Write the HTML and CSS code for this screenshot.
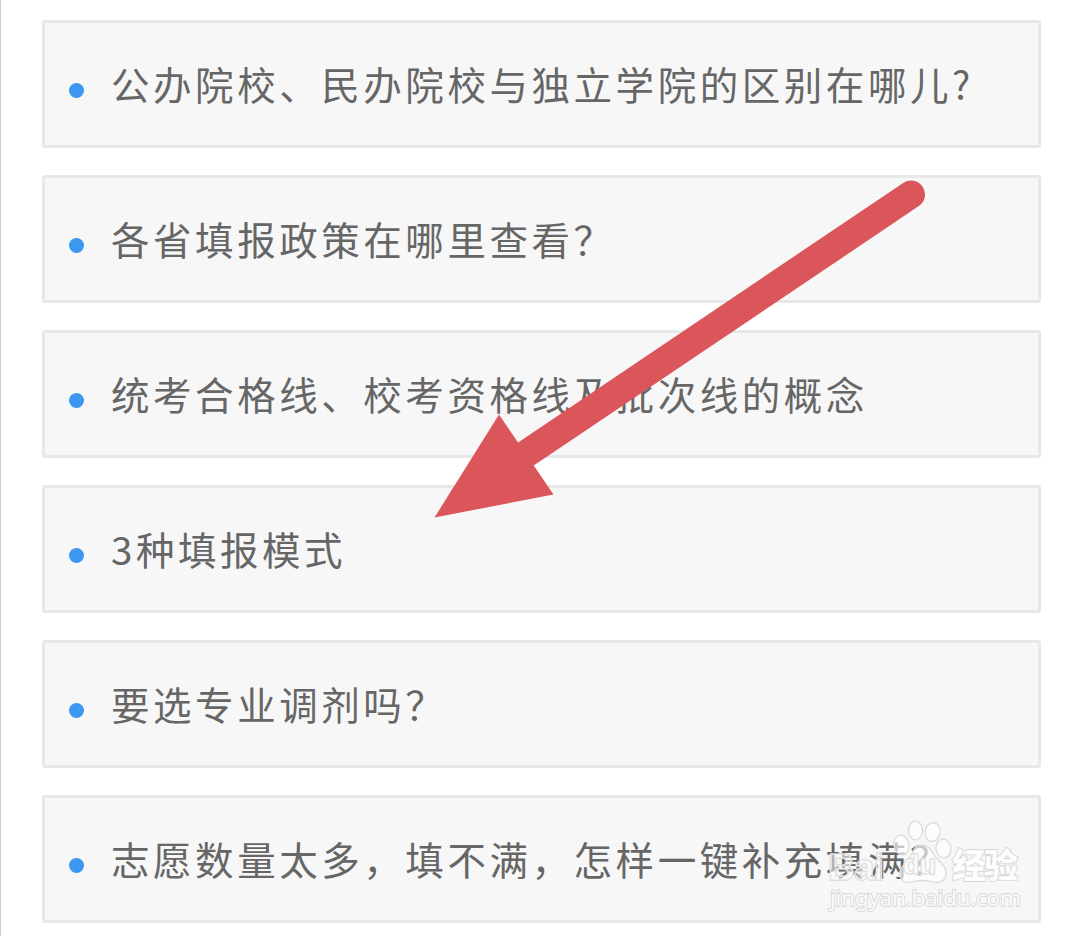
FILE: index.html
```html
<!DOCTYPE html>
<html lang="zh-CN">
  <head>
    <meta charset="UTF-8" />
    <meta name="viewport" content="width=device-width, initial-scale=1.0" />
    <title>志愿填报常见问题</title>
    <link rel="stylesheet" href="styles.css">
  </head>
  <body>
    <main>
      <ul class="questions">
        <li>公办院校、民办院校与独立学院的区别在哪儿?</li>
        <li>各省填报政策在哪里查看？</li>
        <li>统考合格线、校考资格线及批次线的概念</li>
        <li>3种填报模式</li>
        <li>要选专业调剂吗？</li>
        <li>志愿数量太多，填不满，怎样一键补充填满？</li>
      </ul>
    </main>

    <svg class="arrow" width="1080" height="936" viewBox="0 0 1080 936">
      <path d="M911 194.500L520 458" />
      <polygon points="434.500,517.500 499,414.500 553.500,494.500" />
    </svg>

    <svg class="watermark" width="210" height="100" viewBox="820 815 210 100">
      <g class="paw">
        <ellipse cx="901.500" cy="845" rx="7.500" ry="10" transform="rotate(-12 901.500 845)" />
        <ellipse cx="915.500" cy="830.500" rx="7" ry="9.500" />
        <ellipse cx="932.500" cy="832" rx="7.500" ry="9.500" transform="rotate(10 932.500 832)" />
        <ellipse cx="943.500" cy="848.500" rx="7.500" ry="9.500" transform="rotate(-8 943.500 848.500)" />
        <path d="M921 845c8 0 11 6 14 11c5 7 12 11 11 18c-1 8-7 9-13 8c-7-2-15-2-21 0c-8 2-13-3-12-10c1-7 7-10 11-16c3-6 4-11 10-11z" />
      </g>
      <text class="brand" x="828" y="880" textLength="56">Bai</text>
      <text class="brand brand-du" x="903" y="874" textLength="33">du</text>
      <text class="brand-cn" x="952" y="878" textLength="66">经验</text>
      <text class="site" x="830" y="906" textLength="191">jingyan.baidu.com</text>
    </svg>
  </body>
</html>
```
FILE: styles.css
```css
* {
  padding: 0;
  margin: 0;
  box-sizing: border-box;
}
html {
  font-family: "Noto Sans CJK SC", sans-serif;
}
body {
  height: 936px;
  overflow: hidden;
  background-color: #fff;
  border-left: 1px solid #ccc;
}
main {
  padding: 20px 39px 0 41px;
}
.questions {
  display: flex;
  flex-direction: column;
  gap: 27px;
  list-style: none;
}
.questions li {
  display: flex;
  align-items: center;
  height: 128px;
  padding: 0 0 2px 24px;
  background-color: #f7f7f7;
  border: 3px solid #e8e8e8;
  border-radius: 3px;
  color: #666;
  font-size: 38.5px;
  font-weight: 400;
  letter-spacing: 3.55px;
  line-height: 56px;
  white-space: nowrap;
}
.questions li::before {
  content: "";
  width: 15px;
  height: 15px;
  margin: 15px 27px 0 0;
  border-radius: 50%;
  background-color: #3b97ef;
}

/* annotation arrow over the list */
.arrow {
  position: absolute;
  top: 0;
  left: 0;
  fill: #db565b;
}
.arrow path {
  stroke: #db565b;
  stroke-width: 28px;
  stroke-linecap: round;
}

.watermark {
  position: absolute;
  top: 815px;
  left: 820px;
  fill: #fff;
  fill-opacity: 0.9;
  stroke: #d8d8d8;
  stroke-width: 1.2px;
}
.watermark text {
  paint-order: stroke;
  stroke-width: 1.8px;
}
.paw {
  fill-opacity: 0.65;
}
.watermark .brand {
  font: bold 37px "Liberation Sans", sans-serif;
  fill-opacity: 0.5;
  stroke-width: 1.5px;
}
.watermark .brand-du {
  font-size: 27px;
}
.brand-cn {
  font: 900 34px "Noto Sans CJK SC", sans-serif;
}
.site {
  font: 22.5px "Noto Sans", sans-serif;
}
```
